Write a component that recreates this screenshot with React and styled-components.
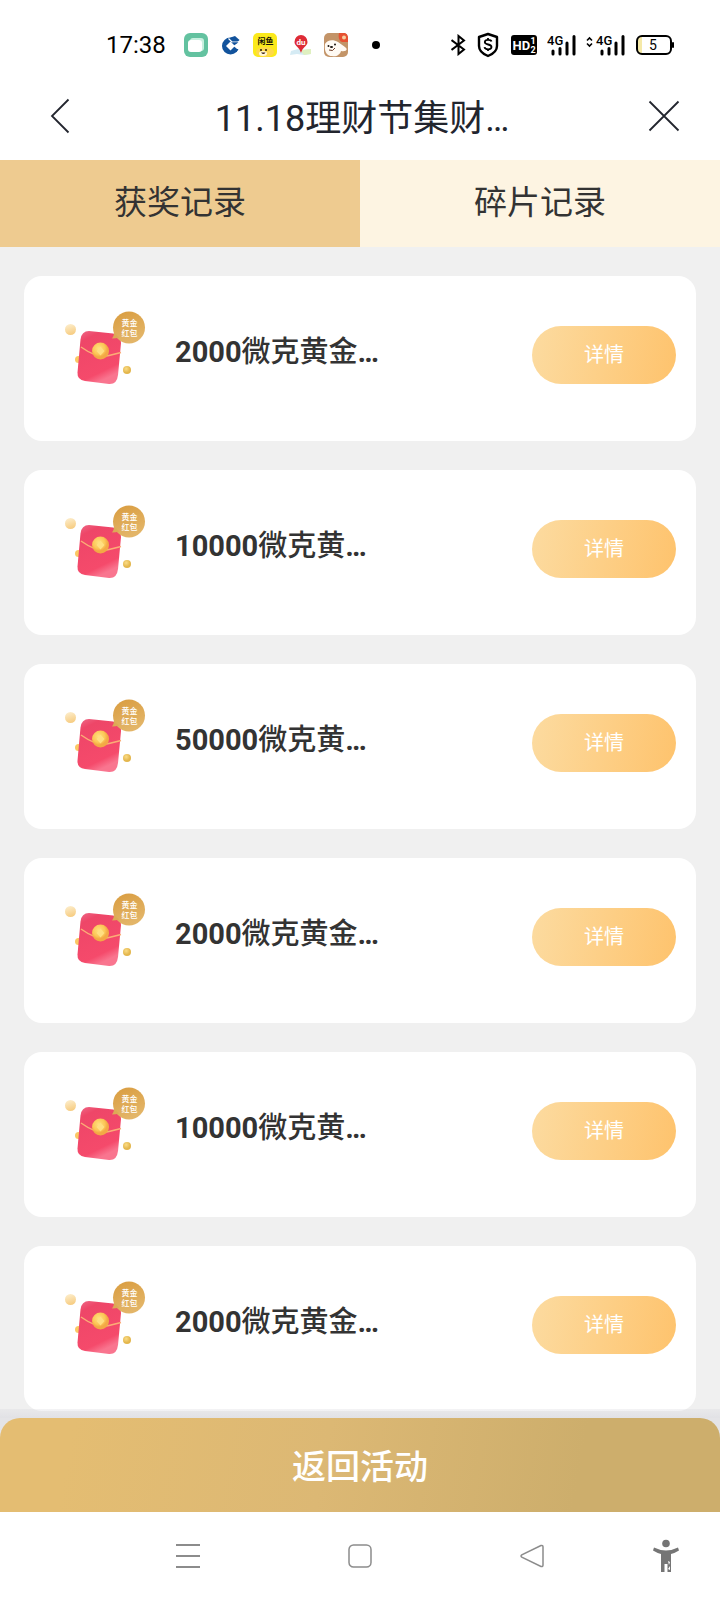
import React from 'react';
import styled, { createGlobalStyle } from 'styled-components';

const color = {
  Text: '#333333',
  Title: '#22252e',
  Page: '#f0f0f0',
  TabActive: '#eecb90',
  Tab: '#fdf4e2',
  NavIcon: '#8c8c8c',
};

const GlobalStyle = createGlobalStyle`
  * {
    box-sizing: border-box;
  }
  body {
    margin: 0;
    background-color: #ffffff;
    font-family: Roboto, "Noto Sans CJK SC", sans-serif;
  }
  button {
    border: 0;
    padding: 0;
    background: none;
    color: inherit;
    font-family: inherit;
    cursor: pointer;
  }
  svg {
    display: block;
    flex-shrink: 0;
  }
`;

const Screen = styled.div`
  display: flex;
  flex-direction: column;
  height: 100vh;
`;

const StatusBar = styled.div`
  display: flex;
  flex-shrink: 0;
  justify-content: space-between;
  align-items: center;
  height: 75px;
  padding: 15px 46px 0 106px;
  color: #000000;
`;

const StatusGroup = styled.div`
  display: flex;
  align-items: center;
  gap: ${({ $gap }) => $gap}px;
`;

const Time = styled.time`
  width: 65px;
  font-size: 24px;
  line-height: 28px;
  white-space: nowrap;
`;

const Header = styled.header`
  display: flex;
  flex-shrink: 0;
  justify-content: space-between;
  align-items: center;
  height: 85px;
  padding: 0 32px 4px 36px;
  color: ${color.Title};
`;

const HeaderButton = styled.button`
  display: flex;
  justify-content: center;
  align-items: center;
  width: 48px;
  height: 48px;
`;

const Title = styled.h1`
  margin: 0;
  padding-top: 6px;
  font-size: 36px;
  font-weight: 400;
  line-height: 48px;
`;

const Tabs = styled.div`
  display: flex;
  flex-shrink: 0;
`;

const Tab = styled.button`
  flex: 1;
  height: 87px;
  padding-bottom: 2px;
  background-color: ${({ $active }) => ($active ? color.TabActive : color.Tab)};
  color: ${color.Text};
  font-size: 33px;
  line-height: 48px;
`;

const List = styled.ul`
  display: flex;
  flex: 1;
  flex-direction: column;
  gap: 29px;
  min-height: 0;
  margin: 0;
  padding: 29px 24px 0;
  overflow-y: auto;
  scrollbar-width: none;
  background-color: ${color.Page};
  list-style: none;
`;

const Card = styled.li`
  display: flex;
  flex-shrink: 0;
  align-items: center;
  height: 165px;
  padding: 0 20px 15px 36px;
  border-radius: 18px;
  background-color: #ffffff;
`;

const CardTitle = styled.h2`
  flex: 1;
  margin: 0;
  padding: 2px 0 0 19px;
  color: ${color.Text};
  font-size: 29px;
  font-weight: 500;
  line-height: 40px;
`;

const Strong = styled.span`
  font-weight: 700;
`;

const DetailButton = styled.button`
  width: 144px;
  height: 58px;
  margin-top: 8px;
  padding-bottom: 4px;
  border-radius: 29px;
  background: linear-gradient(100deg, #fcdba0, #fec36d);
  && {
    color: #ffffff;
  }
  font-size: 20px;
`;

const Bottom = styled.div`
  position: relative;
  flex-shrink: 0;
  background-color: #e4e4e7;

  &::before {
    content: "";
    position: absolute;
    right: 0;
    bottom: 100%;
    left: 0;
    height: 9px;
    background: linear-gradient(rgba(216, 216, 222, 0.3), rgba(216, 216, 222, 0.6));
  }
`;

const ReturnButton = styled.button`
  display: block;
  width: 100%;
  height: 94px;
  padding-top: 4px;
  border-radius: 20px 20px 0 0;
  background: linear-gradient(100deg, #e4bd72 10%, #dcb874 45%, #cdae6c 80%);
  && {
    color: #ffffff;
  }
  font-size: 34px;
  font-weight: 500;
  line-height: 48px;
`;

const SystemNav = styled.nav`
  display: grid;
  flex-shrink: 0;
  grid-template-columns: 1fr 48px 1fr;
  align-items: center;
  height: 88px;
  background-color: #ffffff;
  color: ${color.NavIcon};
`;

const NavSide = styled.div`
  display: flex;
  justify-content: ${({ $end }) => ($end ? 'flex-end' : 'space-between')};
  padding: ${({ $end }) => ($end ? '0 124px 0 0' : '0 30px 0 124px')};
`;

const NavButton = styled.button`
  display: flex;
  justify-content: center;
  align-items: center;
  width: 48px;
  height: 48px;
`;

const GreenApp = () => (
  <svg width="24" height="24" viewBox="0 0 24 24">
    <rect width="24" height="24" rx="6" fill="#63c2a0" />
    <rect x="6" y="5" width="14" height="13" rx="3" fill="#c9f0e0" />
    <rect x="4" y="7" width="14" height="12" rx="3" fill="#ffffff" />
  </svg>
);

const BankApp = () => (
  <svg width="19" height="20" viewBox="0 0 19 20">
    <circle cx="9.500" cy="11" r="8.500" fill="#12539c" />
    <path d="M12.500 11 19 5.500v11z" fill="#ffffff" />
    <path d="M9.500 6.500 14 11l-4.500 4.500L5 11z" fill="#ffffff" />
    <path d="M9.500 2.500 14 1l4.500 4-1.500 1.500h-6z" fill="#12539c" />
    <path d="M7.500 3.500 11 7h7" fill="none" stroke="#ffffff" strokeWidth="1.200" />
    <path d="M11 7.600h6.500l-3.500 2z" fill="#12539c" />
    <path d="M13.500 14h4l-2 3-4-.500z" fill="#12539c" />
  </svg>
);

const FishApp = () => (
  <svg width="24" height="24" viewBox="0 0 24 24">
    <rect width="24" height="24" rx="5" fill="#fbe91c" />
    <ellipse cx="12" cy="19" rx="9" ry="5" fill="#ffd94a" />
    <ellipse cx="10" cy="20.500" rx="4" ry="2.500" fill="#fff8d8" />
    <text x="12.500" y="10.500" textAnchor="middle" fontSize="8" fontWeight="700" fill="#161205">闲鱼</text>
    <circle cx="8" cy="17" r="1" fill="#221a08" />
    <circle cx="13" cy="17" r="1" fill="#221a08" />
    <path d="M8 19.500q2.500 3 4.500 0z" fill="#402010" />
  </svg>
);

const MapApp = () => (
  <svg width="21" height="24" viewBox="0 0 21 24">
    <path d="M1 18l7-2 6 1 6-1 1 5-7 1-7-1-7 1z" fill="#d5ebf4" />
    <path d="M10 17l11-1v5l-7 1z" fill="#dff0c0" />
    <path d="M11 2a6.500 7 0 0 1 6.500 7C17.500 13 12.500 14 11 20 9.500 14 4.500 13 4.500 9A6.500 7 0 0 1 11 2z" fill="#de2b36" />
    <text x="11" y="12" textAnchor="middle" fontSize="8" fontWeight="700" fill="#ffffff">du</text>
  </svg>
);

const DogApp = () => (
  <svg width="24" height="24" viewBox="0 0 24 24">
    <rect width="24" height="24" rx="5" fill="#c39468" />
    <path d="M1 11C3 7 9 6 14 9l7 5c4 3 0 5-4 4-1 4-5 6-9 5-5 0-8-4-7-12z" fill="#fffaf3" />
    <path d="M15 0h6q4 1 3 9h-6c-3-1-4-5-3-9z" fill="#e65232" />
    <circle cx="20" cy="4.500" r="2" fill="#f8cf9f" />
    <circle cx="4.500" cy="13" r="1" fill="#1c1510" />
    <circle cx="11" cy="11.500" r="1" fill="#1c1510" />
    <ellipse cx="7.500" cy="14" rx="1.600" ry="1" fill="#1c1510" />
    <path d="M5 17q4 2 6-2" fill="none" stroke="#6f3a25" />
  </svg>
);

const Dot = () => (
  <svg width="30" height="24" viewBox="0 0 30 24">
    <circle cx="15" cy="12" r="4" />
  </svg>
);

const Bluetooth = () => (
  <svg width="16" height="22" viewBox="0 0 16 22" fill="none" stroke="#000000" strokeWidth="2">
    <path d="M.500 6l12.500 9.500L7.500 20V2l5.500 4.500L.500 16" />
  </svg>
);

const Shield = () => (
  <svg width="24" height="26" viewBox="0 0 24 26">
    <path
      d="M11 2 20 5v9c0 5-4 8-9 10-5-2-9-5-9-10V5z"
      fill="none"
      stroke="#000000"
      strokeWidth="2.400"
      strokeLinejoin="round"
    />
    <path
      d="M14.500 9.500C14 7.500 8 7 7.800 10c0 3.500 6.700 1.500 6.700 5 0 3-6.500 3-7 .2M11 6v1.500M11 17.500V19"
      fill="none"
      stroke="#000000"
      strokeWidth="1.800"
    />
  </svg>
);

const HdBadge = () => (
  <svg width="26" height="20" viewBox="0 0 26 20">
    <rect width="26" height="20" rx="3" />
    <g fill="#ffffff" fontFamily="Roboto" fontWeight="700">
      <text x="1.500" y="15" fontSize="13">HD</text>
      <text x="19.500" y="9" fontSize="9">1</text>
      <text x="19.500" y="18" fontSize="9">2</text>
    </g>
  </svg>
);

const Signal = ({ arrows }) => {
  const x = arrows ? 10 : 0;
  return (
    <svg width={arrows ? 40 : 29} height="22" viewBox={`0 0 ${arrows ? 40 : 29} 22`}>
      {arrows && (
        <path d="M1 6.500 3.500 4 6 6.500M1 9.500 3.500 12 6 9.500" fill="none" stroke="#000000" strokeWidth="1.600" />
      )}
      <text x={x} y="11" fontSize="13" fontWeight="500" fontFamily="Roboto">4G</text>
      <g stroke="#000000" strokeWidth="3" strokeLinecap="round">
        <path d={`M${x + 6} 17v3M${x + 13} 14.500v5.500M${x + 20} 9v11M${x + 27} 2.500v17.500`} />
      </g>
    </svg>
  );
};

const Battery = () => (
  <svg width="38" height="20" viewBox="0 0 38 20">
    <rect x="2" y="2" width="4" height="16" fill="#f5e9a8" />
    <rect x="1" y="1" width="34" height="18" rx="5" fill="none" stroke="#000000" strokeWidth="2" />
    <rect x="36" y="7" width="2" height="6" rx="1" />
    <text x="17" y="15" textAnchor="middle" fontSize="14" fontFamily="Roboto">5</text>
  </svg>
);

const RedPacket = () => (
  <svg width="96" height="92" viewBox="0 0 96 92" aria-hidden="true">
    <defs>
      <linearGradient id="packet" x1="0" y1="0" x2="0.400" y2="1">
        <stop offset="0" stopColor="#ee6c8a" />
        <stop offset="0.200" stopColor="#ee4668" />
        <stop offset="0.850" stopColor="#f54a6b" />
        <stop offset="1" stopColor="#f9758f" />
      </linearGradient>
      <radialGradient id="coin" cx="0.400" cy="0.350">
        <stop offset="0" stopColor="#ffe17e" />
        <stop offset="0.700" stopColor="#fcc758" />
        <stop offset="1" stopColor="#f3a945" />
      </radialGradient>
      <radialGradient id="bead" cx="0.400" cy="0.350">
        <stop offset="0" stopColor="#fbdc86" />
        <stop offset="1" stopColor="#e3b64c" />
      </radialGradient>
      <linearGradient id="badge" x1="0" y1="0" x2="0.400" y2="1">
        <stop offset="0" stopColor="#d99c3f" />
        <stop offset="1" stopColor="#e3b568" />
      </linearGradient>
      <linearGradient id="pale" x1="0" y1="0" x2="0.300" y2="1">
        <stop offset="0" stopColor="#fdf0d2" />
        <stop offset="1" stopColor="#f7ce85" />
      </linearGradient>
    </defs>
    <circle cx="10.500" cy="24.500" r="5.500" fill="url(#pale)" />
    <circle cx="18.500" cy="54.500" r="3.500" fill="#fbc864" />
    <path
      d="M29 26l24 2.500q8.500 1 8 9.500l-3 32q-1 9.500-9 9l-24-3q-8-1-7.500-8.500l3-33q1-8.500 8.500-8.500z"
      fill="url(#packet)"
    />
    <path d="M21 42q17 12 28 8.500l12-3" fill="none" stroke="#fbad76" strokeWidth="1.500" />
    <circle cx="40.500" cy="46" r="8.500" fill="url(#coin)" />
    <path d="M40.500 41.500l4 4.500-4 4.500-4-4.500z" fill="#ffdf82" />
    <circle cx="67" cy="65" r="4" fill="url(#bead)" />
    <circle cx="69" cy="22.500" r="16" fill="url(#badge)" />
    <path d="M54 28q0 3-2 5.500 4 0 7-1z" fill="#dda956" />
    <g fill="#ffffff" fontSize="8" fontWeight="500" textAnchor="middle">
      <text x="69.500" y="21">黄金</text>
      <text x="69.500" y="31">红包</text>
    </g>
  </svg>
);

const Person = () => (
  <svg width="26" height="34" viewBox="0 0 26 34" fill="#757575">
    <circle cx="13" cy="4.500" r="3.800" />
    <path d="M1 8.500q6 3 12 3t12-3l1 3q-4 2.500-8 3.500v18h-3.500v-8h-3v8H8V15q-4-1-8-3.500z" />
    <path d="M15 22l2 1-1 3zM17 27l-2 3 2 1z" fill="#ffffff" />
  </svg>
);

const records = [
  { amount: '2000', name: '微克黄金' },
  { amount: '10000', name: '微克黄' },
  { amount: '50000', name: '微克黄' },
  { amount: '2000', name: '微克黄金' },
  { amount: '10000', name: '微克黄' },
  { amount: '2000', name: '微克黄金' },
];

const Record = ({ amount, name }) => (
  <Card>
    <RedPacket />
    <CardTitle><Strong>{amount}</Strong>{name}<Strong>…</Strong></CardTitle>
    <DetailButton type="button">详情</DetailButton>
  </Card>
);

const App = () => (
  <Screen>
    <GlobalStyle />
    <StatusBar>
      <StatusGroup $gap={13}>
        <Time>17:38</Time>
        <GreenApp />
        <BankApp />
        <FishApp />
        <MapApp />
        <DogApp />
        <Dot />
      </StatusGroup>
      <StatusGroup $gap={10}>
        <Bluetooth />
        <Shield />
        <HdBadge />
        <Signal />
        <Signal arrows />
        <Battery />
      </StatusGroup>
    </StatusBar>
    <Header>
      <HeaderButton type="button" aria-label="返回">
        <svg width="20" height="36" viewBox="0 0 20 36" fill="none" stroke="currentColor" strokeWidth="1.800">
          <path d="M18.500 1.500 2 18l16.500 16.500" />
        </svg>
      </HeaderButton>
      <Title>11.18理财节集财…</Title>
      <HeaderButton type="button" aria-label="关闭">
        <svg width="32" height="32" viewBox="0 0 32 32" fill="none" stroke="currentColor" strokeWidth="1.800">
          <path d="M1.500 1.500l29 29M30.500 1.500l-29 29" />
        </svg>
      </HeaderButton>
    </Header>
    <Tabs role="tablist">
      <Tab type="button" role="tab" aria-selected="true" $active>获奖记录</Tab>
      <Tab type="button" role="tab" aria-selected="false">碎片记录</Tab>
    </Tabs>
    <List>
      {records.map((record, index) => (
        <Record key={index} {...record} />
      ))}
    </List>
    <Bottom>
      <ReturnButton type="button">返回活动</ReturnButton>
    </Bottom>
    <SystemNav>
      <NavSide $end>
        <NavButton type="button" aria-label="最近任务">
          <svg width="24" height="24" viewBox="0 0 24 24" stroke="currentColor" strokeWidth="2">
            <path d="M0 1h24M0 12h24M0 23h24" />
          </svg>
        </NavButton>
      </NavSide>
      <NavButton type="button" aria-label="主页">
        <svg width="24" height="24" viewBox="0 0 24 24" fill="none" stroke="currentColor" strokeWidth="1.500">
          <rect x="1" y="1" width="22" height="22" rx="4.500" />
        </svg>
      </NavButton>
      <NavSide>
        <NavButton type="button" aria-label="返回上一页">
          <svg width="24" height="24" viewBox="0 0 24 24" fill="none" stroke="currentColor" strokeWidth="1.500">
            <path d="M21 1.500 1.800 10.800q-1.500 1.200 0 2.400L21 22.500q2 .500 2-1.500V3q0-2-2-1.500z" />
          </svg>
        </NavButton>
        <NavButton type="button" aria-label="无障碍">
          <Person />
        </NavButton>
      </NavSide>
    </SystemNav>
  </Screen>
);

export default App;
